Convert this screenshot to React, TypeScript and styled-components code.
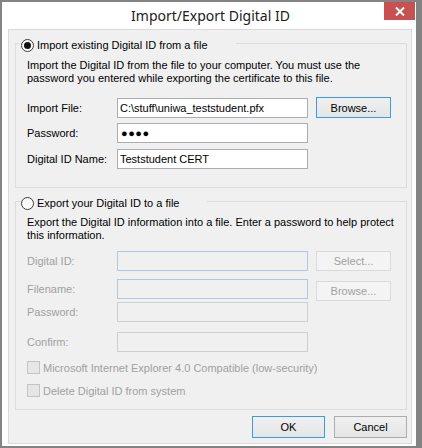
import React from "react";
import styled, { createGlobalStyle } from "styled-components";

const Global = createGlobalStyle`
  html, body {
    margin: 0;
    padding: 0;
    background: #838383;
  }
  body {
    font-family: "Liberation Sans", Arial, sans-serif;
    font-size: 11px;
    color: #000;
  }
`;

const Window = styled.div`
  position: relative;
  width: 422px;
  height: 448px;
  box-sizing: border-box;
  border-style: solid;
  border-color: #838383;
  border-width: 2px 6px 2px 2px;
  background: #ffffff;
  display: flex;
  flex-direction: column;
`;

const TitleBar = styled.div`
  height: 27px;
  display: flex;
  align-items: center;
  justify-content: center;
  padding-left: 3px;
  font-family: "Noto Sans", "Open Sans", sans-serif;
  font-size: 14px;
  color: #1b1b1b;
`;

const CloseButton = styled.div`
  position: absolute;
  top: 0;
  right: 1px;
  width: 31px;
  height: 18px;
  background: #c75050;
  display: flex;
  align-items: center;
  justify-content: center;
`;

const Client = styled.div`
  flex: 1;
  margin: 0 4px 2px 6px;
  border: 1px solid #d9d9d9;
  background: #f0f0f0;
  padding: 0 4px 0 6px;
  display: flex;
  flex-direction: column;
`;

const Group = styled.fieldset<{ $mt: number }>`
  margin: ${(p) => p.$mt}px 0 0 0;
  padding: 0;
  border: 1px solid #dcdcdc;
  min-width: 0;
`;

const Legend = styled.legend`
  display: block;
  margin-left: 5px;
  padding: 4px 28px 0 0;
  line-height: 14px;
`;

const RadioLabel = styled.label`
  display: flex;
  align-items: center;
  gap: 3px;
  height: 14px;
  white-space: nowrap;
`;

const Radio = styled.span<{ $checked?: boolean }>`
  box-sizing: border-box;
  width: 13px;
  height: 13px;
  border-radius: 50%;
  border: 1px solid #3c3c3c;
  background: linear-gradient(#f6f6f6, #ffffff);
  display: inline-flex;
  align-items: center;
  justify-content: center;

  &::after {
    content: "";
    display: ${(p) => (p.$checked ? "block" : "none")};
    width: 7px;
    height: 7px;
    border-radius: 50%;
    background: #111;
  }
`;

const Body = styled.div<{ $pt: number; $pb: number }>`
  padding: ${(p) => p.$pt}px 0 ${(p) => p.$pb}px 11px;
  display: flex;
  flex-direction: column;
`;

const Description = styled.p`
  margin: 0;
  line-height: 13px;
  white-space: nowrap;
`;

const Row = styled.div<{ $mt: number }>`
  display: grid;
  grid-template-columns: 82px 191px 75px;
  column-gap: 8px;
  align-items: center;
  height: 20px;
  margin-top: ${(p) => p.$mt}px;
`;

const FieldLabel = styled.span<{ $disabled?: boolean }>`
  color: ${(p) => (p.$disabled ? "#a0a0a0" : "#000")};
  white-space: nowrap;
`;

const TextBox = styled.input<{ $tone?: "blue" | "gray" }>`
  box-sizing: border-box;
  width: 191px;
  height: 20px;
  margin: 0;
  padding: 0 2px;
  font-family: "Liberation Sans", Arial, sans-serif;
  font-size: 11px;
  color: #000;
  background: #fff;
  border: 1px solid #abadb3;
  border-radius: 0;
  outline: none;

  &:disabled {
    background: #f0f0f0;
    border-color: ${(p) => (p.$tone === "blue" ? "#b4c7dd" : "#cfcfcf")};
  }
`;

const MaskedBox = styled(TextBox)`
  padding-left: 3px;
  letter-spacing: 0.5px;
  font-size: 11px;
`;

const PushButton = styled.button<{ $default?: boolean; $offset?: number }>`
  box-sizing: border-box;
  height: ${(p) => (p.$offset !== undefined ? "20px" : "21px")};
  margin: ${(p) => p.$offset ?? 0}px 0 0 0;
  padding: 0;
  font-family: "Liberation Sans", Arial, sans-serif;
  font-size: 11px;
  color: #000;
  background: linear-gradient(#f0f0f0, #e5e5e5);
  border: 1px solid ${(p) => (p.$default ? "#3c9be8" : "#acacac")};
  border-radius: 0;
  align-self: start;

  &:disabled {
    color: #a0a0a0;
    background: #f4f4f4;
    border-color: #dadada;
  }
`;

const CheckRow = styled.label<{ $mt: number }>`
  display: flex;
  align-items: center;
  gap: 3px;
  height: 13px;
  margin-top: ${(p) => p.$mt}px;
  color: #a0a0a0;
  white-space: nowrap;
`;

const CheckBox = styled.span`
  box-sizing: border-box;
  width: 13px;
  height: 13px;
  border: 1px solid #c4c4c4;
  background: #e6e6e6;
`;

const ButtonBar = styled.div`
  display: flex;
  justify-content: flex-end;
  gap: 9px;
  margin-top: 6px;
`;

const DialogButton = styled(PushButton)`
  width: 73px;
  height: 22px;
`;

export default function App() {
  return (
    <>
      <Global />
      <Window>
        <TitleBar>Import/Export Digital ID</TitleBar>
        <CloseButton>
          <svg width="10" height="9" viewBox="0 0 10 9">
            <path d="M1 0.5 L9 8.5 M9 0.5 L1 8.5" stroke="#fff" strokeWidth="2" />
          </svg>
        </CloseButton>
        <Client>
          <Group $mt={4}>
            <Legend>
              <RadioLabel>
                <Radio $checked />
                Import existing Digital ID from a file
              </RadioLabel>
            </Legend>
            <Body $pt={7} $pb={18}>
              <Description>
                Import the Digital ID from the file to your computer. You must use the
                <br />
                password you entered while exporting the certificate to this file.
              </Description>
              <Row $mt={12}>
                <FieldLabel>Import File:</FieldLabel>
                <TextBox readOnly defaultValue="C:\stuff\uniwa_teststudent.pfx" />
                <PushButton $default>Browse...</PushButton>
              </Row>
              <Row $mt={6}>
                <FieldLabel>Password:</FieldLabel>
                <MaskedBox readOnly defaultValue="●●●●" />
              </Row>
              <Row $mt={6}>
                <FieldLabel>Digital ID Name:</FieldLabel>
                <TextBox readOnly defaultValue="Teststudent CERT" />
              </Row>
            </Body>
          </Group>

          <Group $mt={4}>
            <Legend>
              <RadioLabel>
                <Radio />
                Export your Digital ID to a file
              </RadioLabel>
            </Legend>
            <Body $pt={6} $pb={12}>
              <Description>
                Export the Digital ID information into a file. Enter a password to help protect
                <br />
                this information.
              </Description>
              <Row $mt={8}>
                <FieldLabel $disabled>Digital ID:</FieldLabel>
                <TextBox disabled $tone="blue" />
                <PushButton disabled $offset={1}>
                  Select...
                </PushButton>
              </Row>
              <Row $mt={6}>
                <FieldLabel $disabled>Filename:</FieldLabel>
                <TextBox disabled $tone="blue" />
                <PushButton disabled $offset={5}>
                  Browse...
                </PushButton>
              </Row>
              <Row $mt={6}>
                <FieldLabel $disabled>Password:</FieldLabel>
                <TextBox disabled />
              </Row>
              <Row $mt={10}>
                <FieldLabel $disabled>Confirm:</FieldLabel>
                <TextBox disabled />
              </Row>
              <CheckRow $mt={9}>
                <CheckBox />
                Microsoft Internet Explorer 4.0 Compatible (low-security)
              </CheckRow>
              <CheckRow $mt={10}>
                <CheckBox />
                Delete Digital ID from system
              </CheckRow>
            </Body>
          </Group>

          <ButtonBar>
            <DialogButton $default>OK</DialogButton>
            <DialogButton>Cancel</DialogButton>
          </ButtonBar>
        </Client>
      </Window>
    </>
  );
}
